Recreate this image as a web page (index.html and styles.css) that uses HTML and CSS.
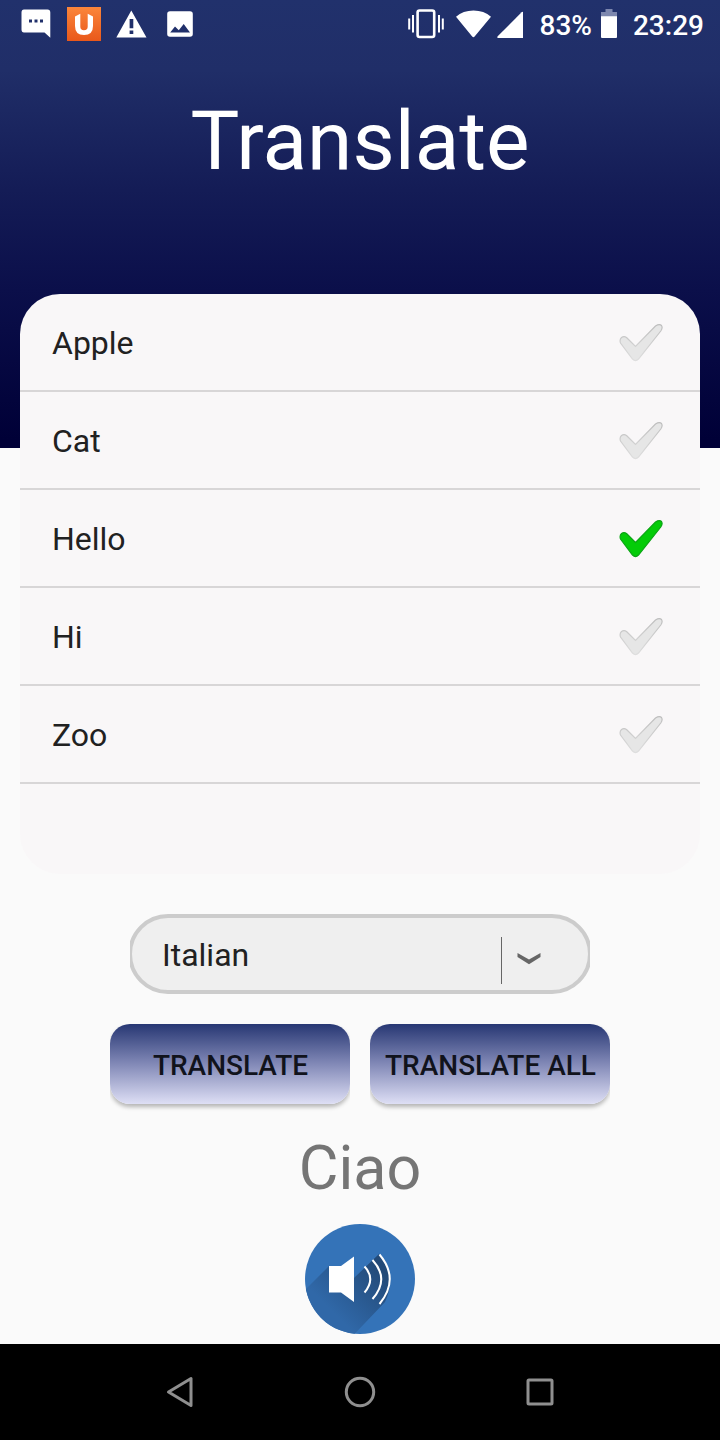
FILE: index.html
```html
<!DOCTYPE html>
<html lang="en">
<head>
<meta charset="utf-8">
<title>Translate</title>
<link rel="stylesheet" href="styles.css">
</head>
<body>
<svg class="defs" width="0" height="0" aria-hidden="true">
  <defs>
    <linearGradient id="orange" x1="0" y1="0" x2="0" y2="1"><stop offset="0" stop-color="#fb863b"/><stop offset="1" stop-color="#e9581a"/></linearGradient>
    <linearGradient id="shade" gradientUnits="userSpaceOnUse" x1="70" y1="38" x2="24" y2="84"><stop offset="0" stop-color="#234a78"/><stop offset="1" stop-color="#3068a8"/></linearGradient>
    <linearGradient id="rim" x1="0" y1="0" x2="0" y2="1"><stop offset="0" stop-color="#bdbdbd"/><stop offset="1" stop-color="#dedede"/></linearGradient>
    <clipPath id="disc"><circle cx="55" cy="55" r="55"/></clipPath>
    <symbol id="check" viewBox="0 0 48 40">
      <path class="check-shape" d="M9.500 14.500L18.500 23.500L38.500 3Q42.500 .5 44.500 2.500Q46 5 43.800 8L21.500 36Q18.500 39 15.500 36L3.500 20Q2.300 16.500 4.500 14.500Q7 12.700 9.500 14.500Z"/>
    </symbol>
  </defs>
</svg>
<main class="screen">
  <header class="top">
    <div class="status">
      <div class="notices">
        <svg width="30" height="30" viewBox="0 0 30 30"><path fill="#fff" fill-rule="evenodd" d="M3 .5H26.500Q29.300 .5 29.300 3.500V28.700L23.500 23.500H3Q.5 23.500 .5 20.500V3.500Q.5.500 3 .5ZM8 10.500v3h3v-3ZM13.500 10.500v3h3v-3ZM19 10.500v3h3v-3Z"/></svg>
        <svg width="34" height="34" viewBox="0 0 34 34"><path fill="url(#orange)" d="M0 0H34V34H0Z"/><path fill="#fff" d="M8 9.500L13.300 6.800V19.500Q13.300 23.300 17 23.300T20.700 19.500V6.800L26 9.500V19Q26 28 17 28T8 19Z"/></svg>
        <svg width="31" height="28" viewBox="0 0 31 28"><path fill="#fff" fill-rule="evenodd" d="M15.300 .5L30.500 27.500H.3ZM13.600 9V18.200H17.300V9ZM13.600 20.500V24H17.300V20.500Z"/></svg>
        <svg width="26" height="26" viewBox="0 0 26 26"><path fill="#fff" fill-rule="evenodd" d="M3 .2H23Q25.800.2 25.800 3V23Q25.800 25.800 23 25.800H3Q.2 25.800.2 23V3Q.2.200 3 .2ZM3.200 21.500H23L16.700 13L11.800 19.300L8 15.500Z"/></svg>
      </div>
      <div class="system">
        <svg width="36" height="30" viewBox="0 0 36 30"><rect x="9.600" y="1.500" width="16.600" height="26.500" rx="2" fill="none" stroke="#fff" stroke-width="2.600"/><path d="M1.200 9.500V20.500M5 6V23.500M31 6V23.500M34.800 9.500V20.500" stroke="#fff" stroke-width="2"/></svg>
        <svg width="35" height="28" viewBox="0 0 35 28"><path fill="#fff" d="M0 6.800Q7 .5 17.500 .5T35 6.800L18.600 26.500Q17.400 28 16.200 26.500Z"/></svg>
        <svg width="27" height="27" viewBox="0 0 27 27"><path fill="#fff" d="M26 1V27H1Q-.3 26.500 .7 25.300L24.600 1.200Q25.500.500 26 1Z"/></svg>
        <span class="charge">83%</span>
        <svg width="16" height="29" viewBox="0 0 16 29"><path fill="#7d87ae" d="M4.500 0H11.500V3H16V8H0V3H4.500Z"/><path fill="#fff" d="M0 7.300H16V28Q16 29 15 29H1Q0 29 0 28Z"/></svg>
        <span class="clock">23:29</span>
      </div>
    </div>
    <h1 class="title">Translate</h1>
  </header>
  <ul class="words">
    <li class="word">Apple<svg class="check"><use href="#check"/></svg></li>
    <li class="word">Cat<svg class="check"><use href="#check"/></svg></li>
    <li class="word">Hello<svg class="check check-on"><use href="#check"/></svg></li>
    <li class="word">Hi<svg class="check"><use href="#check"/></svg></li>
    <li class="word">Zoo<svg class="check"><use href="#check"/></svg></li>
  </ul>
  <div class="language">
    <div class="pill">
      <span class="choice">Italian</span>
      <span class="divider"></span>
      <svg class="chevron" width="24" height="12" viewBox="0 0 24 12"><path fill="#666" d="M.5 0L12 6.500L23.500 0V4L12 11.300L.5 4Z"/></svg>
    </div>
  </div>
  <div class="actions">
    <div class="action"><button class="button">TRANSLATE</button></div>
    <div class="action"><button class="button">TRANSLATE ALL</button></div>
  </div>
  <p class="result">Ciao</p>
  <svg class="speaker" width="110" height="110" viewBox="0 0 110 110">
    <circle cx="55" cy="55" r="55" fill="#3473b8"/>
    <path clip-path="url(#disc)" fill="url(#shade)" d="M24 42L-10 76L40 120L80 78Q92 54 74 30L49 54V34L35 55Z"/>
    <path fill="#fff" d="M24 42H36L49 32.500V78L36 68.500H24Z"/>
    <g fill="none" stroke="#fff" stroke-width="2"><path d="M59.500 42.500Q71 55 59.500 68.500"/><path d="M67.500 36Q85 55 67.500 75"/><path d="M74.500 30.500Q95 55 74.500 80"/></g>
  </svg>
  <nav class="nav">
    <svg width="30" height="32" viewBox="0 0 30 32"><path d="M2.500 16L25 2.500V29.500Z"/></svg>
    <svg width="32" height="32" viewBox="0 0 32 32"><circle cx="16" cy="16" r="13.700"/></svg>
    <svg width="28" height="28" viewBox="0 0 28 28"><rect x="2" y="2" width="24" height="24" rx="1"/></svg>
  </nav>
</main>
</body>
</html>
```
FILE: styles.css
```css
* { box-sizing: border-box; }
body { margin: 0; font-family: Roboto, "Liberation Sans", sans-serif; color: #212121; }
.defs { display: block; height: 0; }
.screen { width: 720px; height: 1440px; display: flex; flex-direction: column; align-items: center; background: #fafafa; }
.top { width: 100%; height: 448px; flex: none; color: #fff; background: linear-gradient(#21316c 0, #202e68 70px, #141c56 190px, #0b0f4a 290px, #000037 440px); }
.status { height: 48px; display: flex; justify-content: space-between; padding: 0 16px 0 21px; font-size: 28px; font-weight: 500; }
.notices, .system { display: flex; align-items: center; }
.notices svg:nth-child(2) { margin-left: 16px; }
.notices svg:nth-child(3) { margin-left: 15px; margin-right: 20px; }
.system svg:nth-child(2) { margin-left: 12px; }
.system svg:nth-child(3) { margin-left: 6px; margin-top: 1px; }
.charge { margin: 3px 9px 0 16px; }
.clock { margin: 3px 0 0 16px; }
.system svg:nth-child(5) { margin-bottom: 1px; }
.title { margin: 45px 0 0; text-align: center; font-size: 82px; line-height: 96px; font-weight: 400; }
.words { list-style: none; width: 680px; height: 580px; flex: none; margin: -154px 0 0; padding: 0; border-radius: 40px; background: #f9f7f8; overflow: hidden; }
.word { height: 98px; border-bottom: 2px solid #d8d6d7; display: flex; align-items: center; justify-content: space-between; padding: 2px 35px 0 32px; font-size: 32px; }
.check { width: 48px; height: 40px; }
.check-shape { fill: var(--core, #e6e6e6); stroke: var(--edge, url(#rim)); stroke-width: 1.2px; }
.check-on { --edge: #0ba514; --core: #04cc08; }
.language { width: 460px; height: 80px; flex: none; margin-top: 40px; overflow: hidden; }
.pill { height: 80px; margin: 0 -2px; border: 4px solid #ccc; border-radius: 42px; background: #efefef; display: flex; align-items: center; padding: 0 47px 0 30px; font-size: 32px; }
.choice { flex: 1; margin-top: 2px; }
.divider { width: 1px; height: 47px; background: #666; margin: 12px 15px 0 0; }
.chevron { margin-top: 10px; }
.actions { display: flex; flex: none; margin-top: 30px; }
.action { width: 240px; height: 90px; overflow: hidden; margin: 0 10px; }
.button { width: 240px; height: 80px; border: 0; border-radius: 20px; padding: 3px 0 0 1px; background: linear-gradient(#273773, #8289b7 50%, #dedff5); box-shadow: 0 3px 4px rgba(0,0,0,.28); font: 500 28px Roboto, "Liberation Sans", sans-serif; color: #11131c; white-space: nowrap; }
.result { margin: 18px 0 0; font-size: 61px; line-height: 72px; color: #757575; }
.speaker { flex: none; margin-top: 20px; }
.nav { width: 100%; height: 96px; flex: none; margin-top: auto; padding: 0 166px; background: #000; display: flex; align-items: center; justify-content: space-between; }
.nav svg { fill: none; stroke: #8f8f8f; stroke-width: 3px; stroke-linejoin: round; }
.nav svg:nth-child(2) { margin-right: 2px; }
```
